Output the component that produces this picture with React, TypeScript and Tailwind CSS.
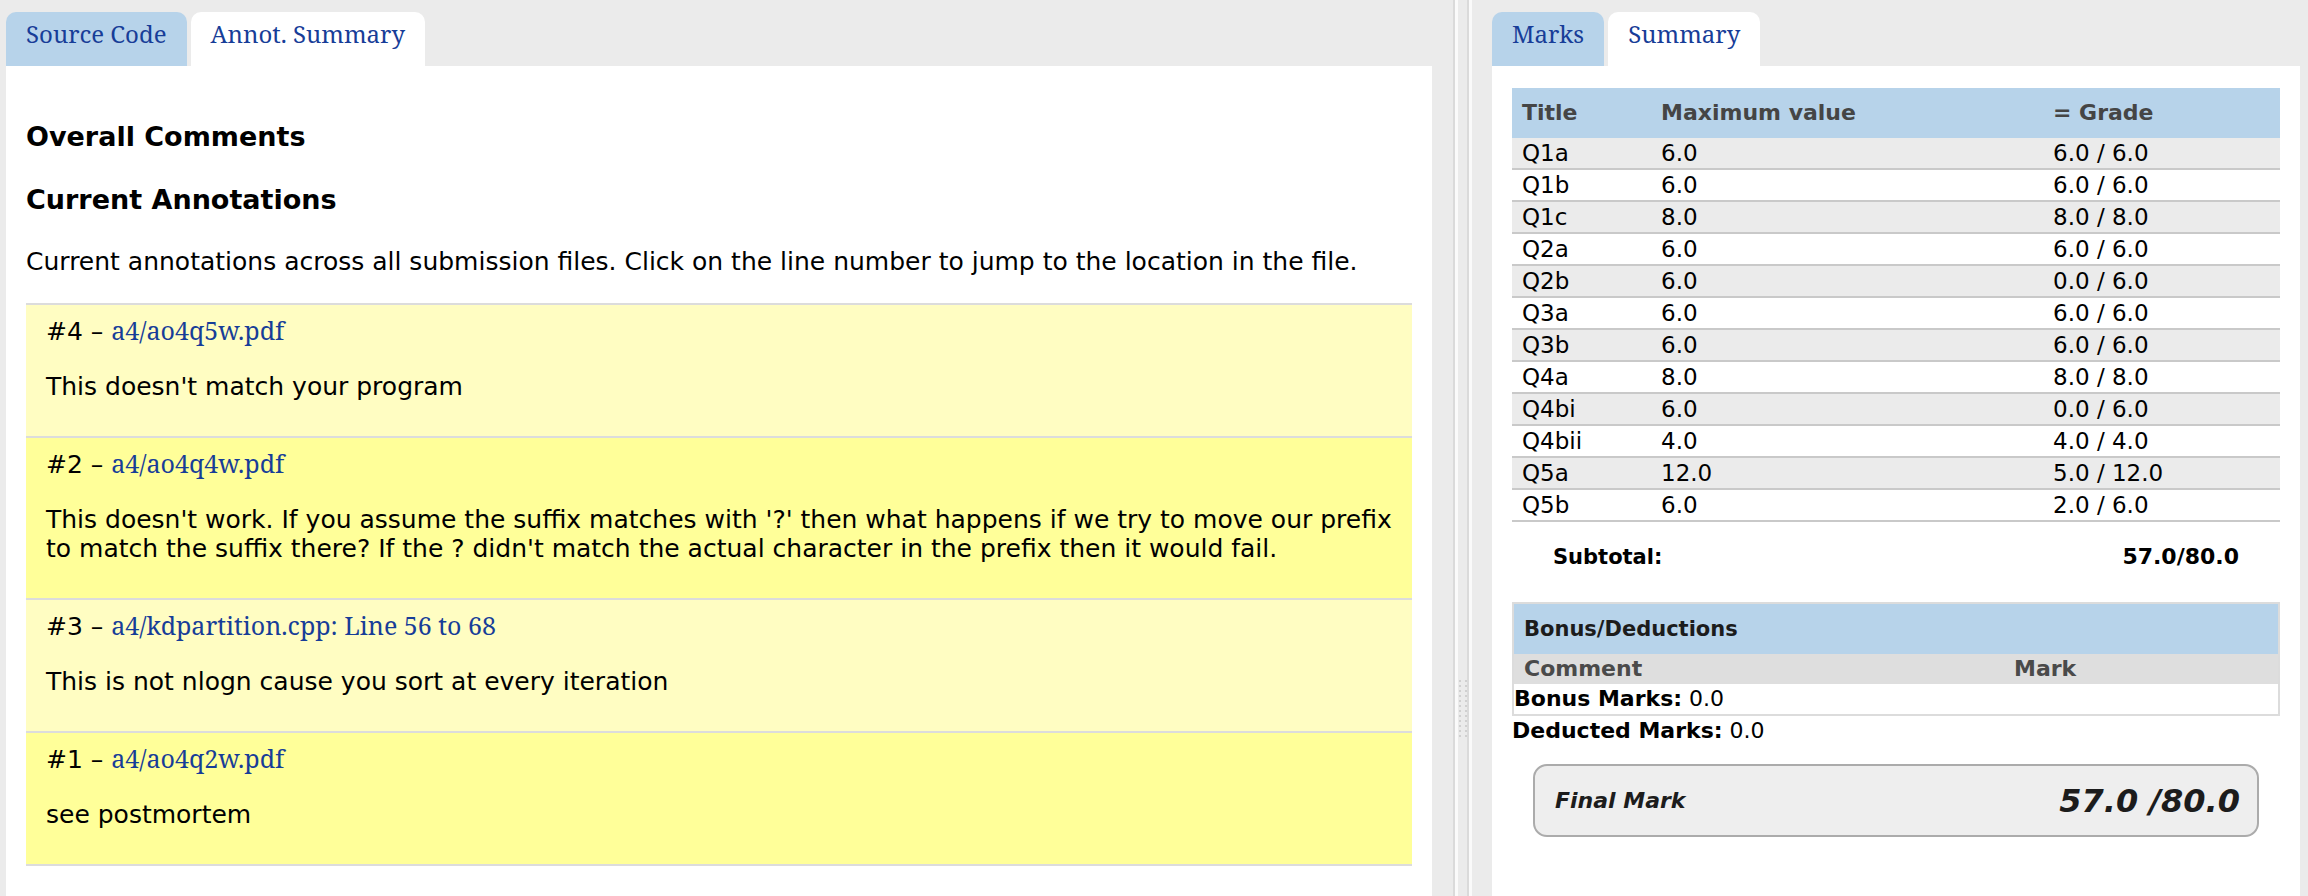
const sans = "font-['DejaVu_Sans',sans-serif]";
const serif = "font-['Noto_Serif',serif]";

const annotations = [
  { id: 4, file: 'a4/ao4q5w.pdf', text: "This doesn't match your program", bg: 'bg-[#fffdc2]' },
  {
    id: 2,
    file: 'a4/ao4q4w.pdf',
    text: "This doesn't work. If you assume the suffix matches with '?' then what happens if we try to move our prefix to match the suffix there? If the ? didn't match the actual character in the prefix then it would fail.",
    bg: 'bg-[#ffff99]',
  },
  { id: 3, file: 'a4/kdpartition.cpp: Line 56 to 68', text: 'This is not nlogn cause you sort at every iteration', bg: 'bg-[#fffdc2]' },
  { id: 1, file: 'a4/ao4q2w.pdf', text: 'see postmortem', bg: 'bg-[#ffff99]' },
];

const marks = [
  ['Q1a', '6.0', '6.0 / 6.0'],
  ['Q1b', '6.0', '6.0 / 6.0'],
  ['Q1c', '8.0', '8.0 / 8.0'],
  ['Q2a', '6.0', '6.0 / 6.0'],
  ['Q2b', '6.0', '0.0 / 6.0'],
  ['Q3a', '6.0', '6.0 / 6.0'],
  ['Q3b', '6.0', '6.0 / 6.0'],
  ['Q4a', '8.0', '8.0 / 8.0'],
  ['Q4bi', '6.0', '0.0 / 6.0'],
  ['Q4bii', '4.0', '4.0 / 4.0'],
  ['Q5a', '12.0', '5.0 / 12.0'],
  ['Q5b', '6.0', '2.0 / 6.0'],
];

function Tab({ label, active }: { label: string; active?: boolean }) {
  return (
    <div
      className={`h-[54px] rounded-t-[10px] px-[20px] pt-[6px] ${serif} text-[24px] leading-[32px] text-[#173d98] ${
        active ? 'bg-white' : 'bg-[#b7d3ea]'
      }`}
    >
      {label}
    </div>
  );
}

function Splitter() {
  return (
    <div className="flex w-[20px] shrink-0">
      <div className="w-[2px] bg-[#dadada]" />
      <div className="w-[3px] bg-[#fafafa]" />
      <div className="w-[9px] pt-[680px] pl-[1px]">
        <div className="grid grid-cols-2 gap-x-[3px] gap-y-[3px]">
          {Array.from({ length: 24 }).map((_, i) => (
            <div key={i} className="h-[2px] w-[2px] bg-[#d0d0d0]" />
          ))}
        </div>
      </div>
      <div className="w-[2px] bg-[#dadada]" />
      <div className="w-[3px] bg-[#fafafa]" />
    </div>
  );
}

export default function App() {
  return (
    <div className={`flex h-[896px] w-[2308px] overflow-hidden bg-[#ebebeb] ${sans} text-black`}>
      {/* Left pane - annotation summary */}
      <div className="flex w-[1453px] shrink-0 flex-col pl-[6px] pr-[21px] pt-[12px]">
        <div className="flex gap-[4px]">
          <Tab label="Source Code" />
          <Tab label="Annot. Summary" active />
        </div>
        <div className="flex-1 bg-white px-[20px] pt-[55px]">
          <h2 className="text-[27px] font-bold leading-[32px]">Overall Comments</h2>
          <h2 className="mt-[31px] text-[27px] font-bold leading-[32px]">Current Annotations</h2>
          <p className="mt-[31px] text-[25px] leading-[29px]">
            Current annotations across all submission files. Click on the line number to jump to the location in the file.
          </p>
          <div className="mt-[27px] border-b-2 border-[#dcdcdc]">
            {annotations.map((a) => (
              <div key={a.id} className={`border-t-2 border-[#dcdcdc] px-[20px] pt-[11px] pb-[35px] ${a.bg}`}>
                <div className="text-[25px] leading-[29px]">
                  #{a.id} – <span className={`${serif} text-[#173d98]`}>{a.file}</span>
                </div>
                <p className="mt-[26px] text-[25px] leading-[29px]">{a.text}</p>
              </div>
            ))}
          </div>
        </div>
      </div>

      <Splitter />

      {/* Right pane - marks summary */}
      <div className="flex w-[835px] shrink-0 flex-col pl-[19px] pr-[8px] pt-[12px]">
        <div className="flex gap-[4px]">
          <Tab label="Marks" />
          <Tab label="Summary" active />
        </div>
        <div className="flex-1 bg-white px-[20px] pt-[22px]">
          <div className="grid grid-cols-[139px_392px_1fr]">
            <div className="contents text-[22px] font-bold text-[#454545]">
              <div className="h-[50px] bg-[#b7d3ea] pl-[10px] leading-[50px]">Title</div>
              <div className="h-[50px] bg-[#b7d3ea] pl-[10px] leading-[50px]">Maximum value</div>
              <div className="h-[50px] bg-[#b7d3ea] pl-[10px] leading-[50px]">= Grade</div>
            </div>
            {marks.map((m, i) => (
              <div key={m[0]} className="contents text-[23px]">
                {m.map((cell, j) => (
                  <div
                    key={j}
                    className={`h-[32px] border-b-2 border-[#c9c9c9] pl-[10px] leading-[30px] ${
                      i % 2 === 0 ? 'bg-[#ebebeb]' : 'bg-white'
                    }`}
                  >
                    {cell}
                  </div>
                ))}
              </div>
            ))}
          </div>

          <div className="mt-[20px] flex justify-between px-[41px] leading-[30px] font-bold">
            <span className="text-[21px]">Subtotal:</span>
            <span className="text-[22px]">57.0/80.0</span>
          </div>

          <div className="mt-[30px] border-2 border-[#dcdcdc]">
            <div className="h-[50px] bg-[#b7d3ea] pl-[10px] text-[21px] font-bold leading-[50px] text-[#1c1c1c]">
              Bonus/Deductions
            </div>
            <div className="grid h-[30px] grid-cols-[500px_1fr] bg-[#dedede] text-[22px] font-bold leading-[30px] text-[#4a4a4a]">
              <span className="pl-[10px]">Comment</span>
              <span>Mark</span>
            </div>
            <div className="h-[30px] text-[22px] leading-[30px]">
              <span className="font-bold">Bonus Marks:</span> 0.0
            </div>
          </div>
          <div className="h-[29px] text-[22px] leading-[29px]">
            <span className="font-bold">Deducted Marks:</span> 0.0
          </div>

          <div className="mx-[21px] mt-[19px] flex h-[73px] items-center justify-between rounded-[14px] border-2 border-[#ababab] bg-[#eeeeee] pl-[20px] pr-[17px]">
            <span className="text-[22px] font-bold italic text-[#1c1c1c]">Final Mark</span>
            <span className="text-[32px] font-bold italic text-[#1c1c1c]">57.0 /80.0</span>
          </div>
        </div>
      </div>
    </div>
  );
}
